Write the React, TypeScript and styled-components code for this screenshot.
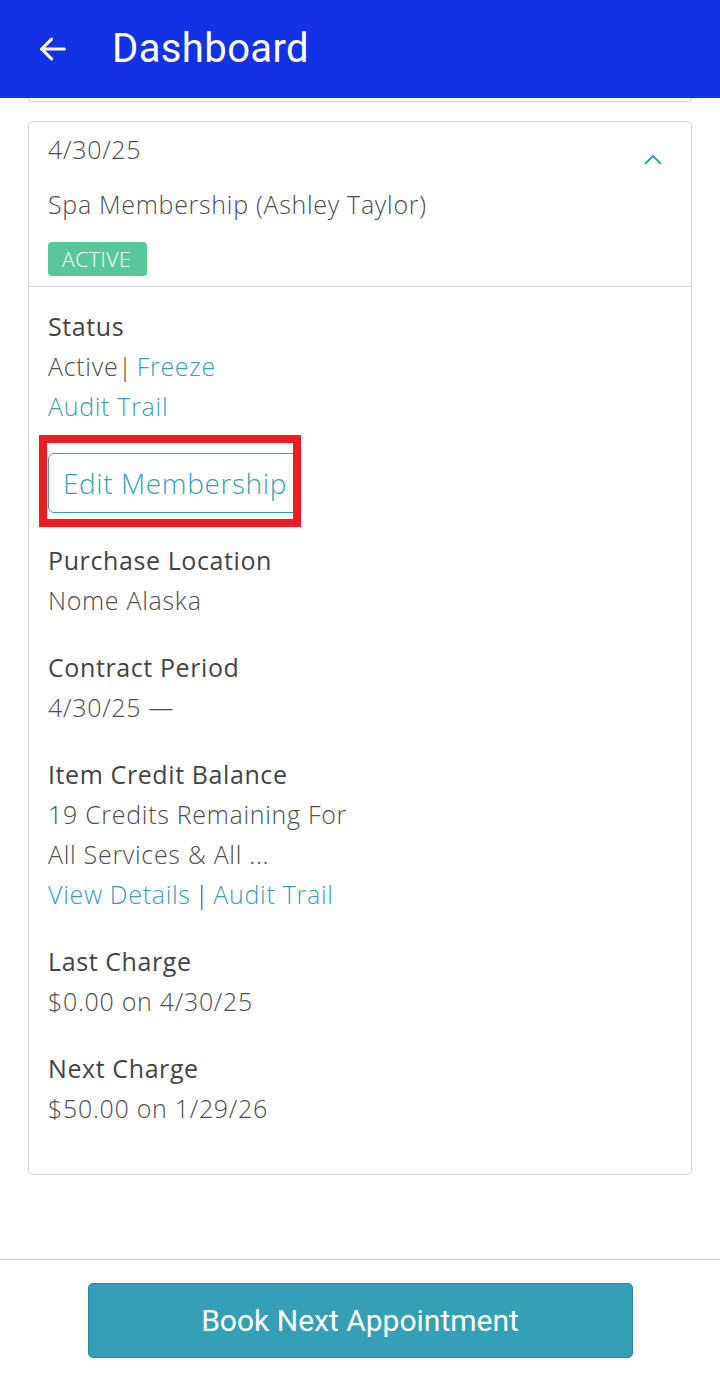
import React from 'react';
import styled, { createGlobalStyle } from 'styled-components';

const GlobalStyle = createGlobalStyle`
  html, body {
    margin: 0;
    padding: 0;
    background: #ffffff;
  }
  body {
    font-family: "Open Sans", Lato, sans-serif;
  }
`;

const Page = styled.div`
  width: 720px;
  height: 1390px;
  display: flex;
  flex-direction: column;
  background: #fff;
  overflow: hidden;
`;

const Header = styled.header`
  height: 98px;
  flex-shrink: 0;
  background: #1232e4;
  display: flex;
  align-items: center;
  padding-left: 36px;
  gap: 42px;
  color: #fff;
`;

const Title = styled.h1`
  margin: 0;
  font-family: Roboto, sans-serif;
  font-weight: 400;
  font-size: 40px;
  letter-spacing: 0.4px;
  padding-bottom: 2px;
`;

const Content = styled.main`
  flex: 1;
  padding: 0 28px;
  display: flex;
  flex-direction: column;
  gap: 19px;
`;

// bottom edge of the card above, scrolled under the header
const PrevCardEdge = styled.div`
  height: 3px;
  border: 1px solid #d4d4d4;
  border-top: none;
  border-radius: 0 0 5px 5px;
`;

const Card = styled.section`
  border: 1px solid #d4d4d4;
  border-radius: 5px;
  color: #555;
`;

const CardHead = styled.div`
  position: relative;
  padding: 10px 19px 10px;
  border-bottom: 1px solid #d4d4d4;
`;

const HeadLine = styled.div<{ $gap?: number }>`
  font-size: 25px;
  font-weight: 300;
  letter-spacing: 0.7px;
  line-height: 34px;
  color: #4d4d4d;
  margin-bottom: ${p => p.$gap ?? 0}px;
`;

const Chevron = styled.svg`
  position: absolute;
  right: 28px;
  top: 32px;
`;

const Badge = styled.span`
  display: inline-block;
  background: #5ac79b;
  color: #fff;
  font-size: 21px;
  font-weight: 300;
  letter-spacing: 0.6px;
  line-height: 34px;
  padding: 0 16px 0 14px;
  border-radius: 4px;
`;

const CardBody = styled.div`
  padding: 19px 19px 46px;
`;

const Section = styled.div`
  margin-bottom: 27px;
  &:last-child {
    margin-bottom: 0;
  }
`;

const Label = styled.div`
  font-size: 25px;
  line-height: 40px;
  letter-spacing: 0.6px;
  color: #444;
  font-weight: 400;
`;

// $tight narrows the spaces around the "|" separators only
const Value = styled.div<{ $tight?: boolean }>`
  font-size: 25px;
  line-height: 40px;
  letter-spacing: 0.7px;
  word-spacing: ${p => (p.$tight ? '-3px' : '0')};
  font-weight: 300;
  color: #4d4d4d;
`;

const Link = styled.a`
  color: #3a9fae;
  text-decoration: none;
  font-weight: 300;
  word-spacing: 0;
`;

const Highlight = styled.div`
  position: relative;
  width: 244px;
  margin: 27px 0 26px;
`;

const EditButton = styled.button`
  display: block;
  width: 252px;
  height: 60px;
  padding: 0 0 0 14px;
  text-align: left;
  white-space: nowrap;
  overflow: hidden;
  border: 1px solid #3a9fae;
  border-radius: 6px;
  background: #fff;
  color: #3a9fae;
  font-family: "Open Sans", sans-serif;
  font-weight: 300;
  font-size: 28px;
  letter-spacing: 0.6px;
`;

const RedBox = styled.div`
  position: absolute;
  left: -9px;
  top: -18px;
  width: 246px;
  height: 76px;
  border: 8px solid #ea1c24;
`;

const Footer = styled.footer`
  flex-shrink: 0;
  height: 131px;
  border-top: 1px solid #cfcfcf;
  display: flex;
  justify-content: center;
  padding-top: 23px;
  box-sizing: border-box;
`;

const BookButton = styled.button`
  width: 545px;
  height: 75px;
  background: #35a0b5;
  border: 1px solid #2a8799;
  border-radius: 5px;
  color: #fff;
  font-family: Roboto, sans-serif;
  font-size: 30px;
  font-weight: 400;
`;

export default function App() {
  return (
    <Page>
      <GlobalStyle />
      <Header>
        <svg width="34" height="34" viewBox="0 0 24 24" fill="none" stroke="#fff" strokeWidth="2.2" strokeLinecap="round" strokeLinejoin="round">
          <path d="M20 12H4" />
          <path d="M11 5l-7 7 7 7" />
        </svg>
        <Title>Dashboard</Title>
      </Header>
      <Content>
        <PrevCardEdge />
        <Card>
          <CardHead>
            <HeadLine $gap={21}>4/30/25</HeadLine>
            <HeadLine $gap={21}>Spa Membership (Ashley Taylor)</HeadLine>
            <Badge>ACTIVE</Badge>
            <Chevron width="20" height="12" viewBox="0 0 20 12" fill="none" stroke="#3a9fae" strokeWidth="2">
              <path d="M2 10l8-8 8 8" />
            </Chevron>
          </CardHead>
          <CardBody>
            <Section>
              <Label>Status</Label>
              <Value $tight>Active| <Link href="#">Freeze</Link></Value>
              <Value><Link href="#">Audit Trail</Link></Value>
              <Highlight>
                <EditButton>Edit Membership</EditButton>
                <RedBox />
              </Highlight>
            </Section>
            <Section>
              <Label>Purchase Location</Label>
              <Value>Nome Alaska</Value>
            </Section>
            <Section>
              <Label>Contract Period</Label>
              <Value>4/30/25 —</Value>
            </Section>
            <Section>
              <Label>Item Credit Balance</Label>
              <Value>19 Credits Remaining For</Value>
              <Value>All Services &amp; All ...</Value>
              <Value $tight><Link href="#">View Details</Link> | <Link href="#">Audit Trail</Link></Value>
            </Section>
            <Section>
              <Label>Last Charge</Label>
              <Value>$0.00 on 4/30/25</Value>
            </Section>
            <Section>
              <Label>Next Charge</Label>
              <Value>$50.00 on 1/29/26</Value>
            </Section>
          </CardBody>
        </Card>
      </Content>
      <Footer>
        <BookButton>Book Next Appointment</BookButton>
      </Footer>
    </Page>
  );
}
